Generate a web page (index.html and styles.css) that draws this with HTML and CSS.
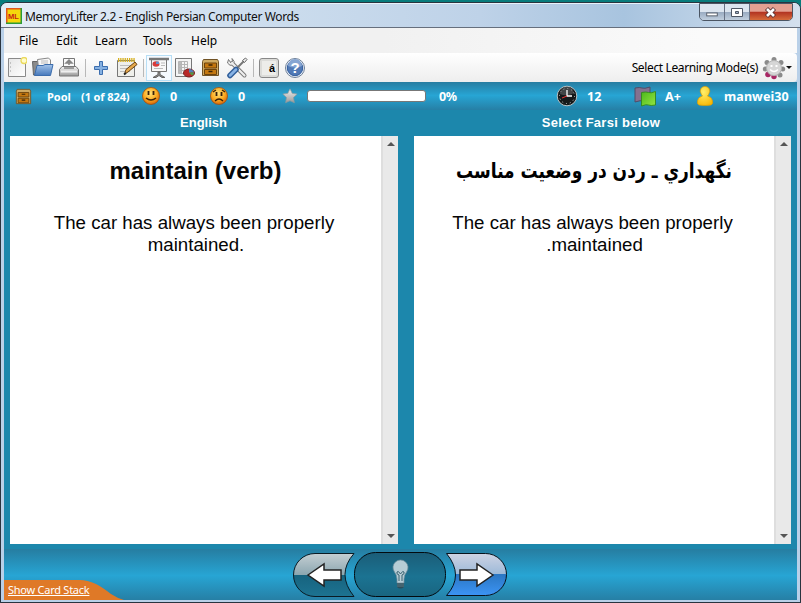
FILE: index.html
```html
<!DOCTYPE html>
<html lang="en">
<head>
<meta charset="utf-8">
<title>MemoryLifter 2.2 - English Persian Computer Words</title>
<link rel="stylesheet" href="styles.css">
</head>
<body>
<svg width="0" height="0" class="defs">
  <defs>
    <linearGradient id="paper" x1="0" y1="0" x2="1" y2="1"><stop offset="0" stop-color="#e6e6e6"/><stop offset="1" stop-color="#fff"/></linearGradient>
    <linearGradient id="blue" x1="0" y1="0" x2="0" y2="1"><stop offset="0" stop-color="#a4c4ea"/><stop offset="1" stop-color="#4678bb"/></linearGradient>
    <linearGradient id="grey" x1="0" y1="0" x2="0" y2="1"><stop offset="0" stop-color="#f4f4f4"/><stop offset="1" stop-color="#999"/></linearGradient>
    <linearGradient id="green" x1="0" y1="0" x2="1" y2="1"><stop offset="0" stop-color="#4cb81c"/><stop offset="1" stop-color="#93e542"/></linearGradient>
    <radialGradient id="face" cx=".45" cy=".35" r=".65"><stop offset="0" stop-color="#ffe27a"/><stop offset=".6" stop-color="#fbab20"/><stop offset="1" stop-color="#d9650c"/></radialGradient>
    <radialGradient id="person" cx=".4" cy=".3" r=".8"><stop offset="0" stop-color="#fff06a"/><stop offset="1" stop-color="#f8b400"/></radialGradient>
    <linearGradient id="navGrey" x1="0" y1="0" x2="0" y2="1"><stop offset="0" stop-color="#c5cfd3"/><stop offset=".5" stop-color="#8ba6b0"/><stop offset=".5" stop-color="#17637f"/><stop offset="1" stop-color="#1d7391"/></linearGradient>
    <linearGradient id="navMid" x1="0" y1="0" x2="0" y2="1"><stop offset="0" stop-color="#1b5d78"/><stop offset=".55" stop-color="#1b7392"/><stop offset="1" stop-color="#196580"/></linearGradient>
    <linearGradient id="navBlue" x1="0" y1="0" x2="0" y2="1"><stop offset="0" stop-color="#ced3e3"/><stop offset=".5" stop-color="#9cb9d8"/><stop offset=".5" stop-color="#2b77c3"/><stop offset="1" stop-color="#3c94f5"/></linearGradient>
    <symbol id="cabinet" viewBox="0 0 19 19"><path d="M2.500 1.500h14l1 2v14h-16v-14z" fill="#d0ab63" stroke="#705225"/><path d="M3.500 5h12v5h-12zM3.500 11.500h12v5h-12z" fill="#c4770f" stroke="#6c430c"/><path d="M7.500 7h4M7.500 13.500h4" fill="none" stroke="#3a2407" stroke-width="1.300"/></symbol>
  </defs>
</svg>
<div class="window">
  <header class="titlebar">
    <svg class="logo" viewBox="0 0 16 16"><path d="M0 0h16v16H0z" fill="#f5d80c"/><path d="M.75 16V.75H16" fill="none" stroke="#e2571b" stroke-width="1.500"/><path d="M15.250 0v15.250H0" fill="none" stroke="#2c9b37" stroke-width="1.500"/><text x="2" y="10.500" class="logo-text">ML</text></svg>
    <span class="title">MemoryLifter 2.2 - English Persian Computer Words</span>
    <div class="controls">
      <span class="control"><svg viewBox="0 0 25 17"><rect x="7" y="9" width="11" height="3" fill="#fff" stroke="#555c68"/></svg></span>
      <span class="control"><svg viewBox="0 0 24 17"><path d="M6.500 4.500h11v8h-11z" fill="#fff" stroke="#4f5866"/><path d="M10.500 7.500h3v2h-3z" fill="#9eafc6" stroke="#4f5866"/></svg></span>
      <span class="control close"><svg viewBox="0 0 42 17"><path d="M16.500 4.500l8 8M24.500 4.500l-8 8" stroke="#5d3434" stroke-width="4.500"/><path d="M17 5l7 7M24 5l-7 7" stroke="#fff" stroke-width="2.600"/></svg></span>
    </div>
  </header>
  <nav class="menu"><span class="m-file">File</span><span class="m-edit">Edit</span><span class="m-learn">Learn</span><span class="m-tools">Tools</span><span class="m-help">Help</span></nav>
  <div class="toolbar">
    <svg class="i-new" viewBox="0 0 20 22"><path d="M1.500 1.500h17v18h-17z" fill="url(#paper)" stroke="#8a8a8a"/><path d="M3 6h1M3 10h1M3 14h1" stroke="#999"/><circle cx="17" cy="3.500" r="3" fill="#fffcc9" stroke="#ead95c" stroke-width="1.300"/></svg>
    <svg class="i-open" viewBox="0 0 24 22"><path d="M2.500 18L1.500 4.500h6l1 2h8V18z" fill="#8b8b8b" stroke="#666"/><path d="M6.500 2.500l11-1.500 2 2v8h-12z" fill="#f7f7f7" stroke="#888"/><path d="M10 4h7M10 6h7" stroke="#bbb"/><path d="M6 8.500h6l2-1h8l-2.500 11H3.500z" fill="url(#blue)" stroke="#3c6dad"/></svg>
    <svg class="i-print" viewBox="0 0 22 22"><path d="M5.500 11V1.500h11V11" fill="#f8f8f8" stroke="#777"/><path d="M11 8V4M11 3l3 3H8z" fill="#858585" stroke="#858585" stroke-width="1.500"/><path d="M4 9.500h14l2.500 3v6.500h-19v-6.500z" fill="url(#grey)" stroke="#777"/><path d="M6 11h10" stroke="#555" stroke-width="1.200"/><path d="M3 13.500h16v2H3z" fill="#eee"/></svg>
    <i class="separator"></i>
    <svg class="i-add" viewBox="0 0 16 16"><path d="M6.500 1.500h3v5h5v3h-5v5h-3v-5h-5v-3h5z" fill="#86b1e2" stroke="#3c6eaf"/></svg>
    <svg class="i-note" viewBox="0 0 22 22"><path d="M1.500 3.500h17v16h-17z" fill="#efefeb" stroke="#777"/><path d="M4 8.500h12M4 11.500h12M4 14.500h10" stroke="#bdbdbd"/><path d="M2 3h17" stroke="#d6b020" stroke-width="4" stroke-dasharray="1.300 .9"/><path d="M8.500 17l1.500-4.500 9-7.500 2 2.500-9 7.500z" fill="#e5a94d" stroke="#664114"/><path d="M8 17.500l2-1.500" stroke="#222" stroke-width="2"/></svg>
    <i class="separator"></i>
    <span class="selected"><svg viewBox="0 0 22 22"><path d="M3.500 2.500h15v12h-15z" fill="#f8f8f8" stroke="#777"/><path d="M1 2h20" stroke="#777" stroke-width="2.500"/><ellipse cx="8" cy="7" rx="3.500" ry="2.700" fill="#d63b3b"/><path d="M8 7V4.500h3V7z" fill="#678fc8"/><path d="M13 6h4M13 8.500h4M6 11.500h9" stroke="#bbb"/><path d="M10 15h2v2.500l5 3h-3l-3-2-3 2H5l5-3z" fill="#888" stroke="#666"/></svg></span>
    <svg class="i-report" viewBox="0 0 22 22"><path d="M1.500 1.500h16v18h-16z" fill="#f4f4f4" stroke="#777"/><path d="M4.500 4.500h3v12h-3z" fill="#bbb"/><path d="M4.500 4.500h9v12h-9zM7.500 4v13M10.500 4v13M4 7.500h10M4 10.500h10M4 13.500h10" fill="none" stroke="#b5b5b5"/><ellipse cx="15" cy="16" rx="5.500" ry="4" fill="#b92828" stroke="#762020"/><path d="M15 15.500v-3.500q4 0 5 3.500z" fill="#527fb9"/><path d="M15 15.500h5q0 2-2 3z" fill="#4e9c45"/></svg>
    <svg class="i-cabinet" viewBox="0 0 19 19"><use href="#cabinet"/></svg>
    <svg class="i-tools" viewBox="0 0 22 22"><path d="M6 6L18.500 18.500" stroke="#777" stroke-width="4" stroke-linecap="round"/><path d="M2.500 2.500L1.500 6q2 3.500 6 2Q9.500 4 6 1.500L6.500 4.500 5 6z" fill="#eee" stroke="#777"/><path d="M6 6L18.500 18.500" stroke="#eee" stroke-width="2.200" stroke-linecap="round"/><path d="M11 11l7-7" stroke="#777" stroke-width="2"/><path d="M16.500 3.500l3-2.500 1.500 1.500-2.500 3z" fill="#eee" stroke="#666"/><path d="M4 18.500L10 12.500" stroke="#315f9b" stroke-width="5.500" stroke-linecap="round"/><path d="M4 18.500L10 12.500" stroke="#88b3e5" stroke-width="2.500" stroke-linecap="round"/></svg>
    <i class="separator"></i>
    <span class="key">á</span>
    <svg class="i-help" viewBox="0 0 22 22"><circle cx="11" cy="11" r="9.500" fill="#e8eef7" stroke="#6d7f98"/><circle cx="11" cy="11" r="7.700" fill="#5179b5" stroke="#315c9e"/><path d="M4 9a7 7 0 0 1 14 0q-7 3-14 0z" fill="#86a5d2"/><text x="11" y="16.300" text-anchor="middle" class="question">?</text></svg>
    <span class="mode">Select Learning Mode(s)</span>
    <svg class="i-gear" viewBox="0 0 24 24"><g fill="#8b8b8b"><circle cx="12" cy="3.500" r="2.500"/><circle cx="5" cy="6.500" r="2.500"/><circle cx="19" cy="6.500" r="2.500"/><circle cx="3.300" cy="13" r="2.500"/><circle cx="20.700" cy="13" r="2.500"/><circle cx="18" cy="19" r="2.500"/></g><circle cx="6" cy="18.500" r="2.800" fill="#a82664"/><circle cx="12" cy="20.500" r="2.700" fill="#a82664"/><circle cx="12" cy="12" r="7.500" fill="#d6d6d6" stroke="#b4b4b4"/><path d="M8.500 10h2M13.500 10h2" stroke="#fff" stroke-width="2"/><path d="M8 13.500q4 4 8 0" fill="none" stroke="#fff" stroke-width="1.500"/></svg>
    <i class="dropdown"></i>
  </div>
  <div class="status">
    <svg class="s-cabinet" viewBox="0 0 19 19"><use href="#cabinet"/></svg>
    <span class="pool">Pool</span><span class="count">(1 of 824)</span>
    <svg class="s-happy" viewBox="0 0 20 20"><circle cx="10" cy="10" r="8.500" fill="url(#face)" stroke="#a34f0c" stroke-width=".8"/><path d="M7.500 5v4M12.500 5v4" stroke="#38200b" stroke-width="1.800"/><path d="M5 12q5 4 10 0" fill="none" stroke="#3d210a" stroke-width="1.600"/></svg>
    <span class="right">0</span>
    <svg class="s-sad" viewBox="0 0 20 20"><circle cx="10" cy="10" r="8.500" fill="url(#face)" stroke="#a34f0c" stroke-width=".8"/><path d="M7.500 6v4M12.500 6v4" stroke="#38200b" stroke-width="1.800"/><path d="M4 6l3-2M13 4l3 2M6 15q4-4 8 0" fill="none" stroke="#38200b" stroke-width="1.200"/></svg>
    <span class="wrong">0</span>
    <svg class="s-star" viewBox="0 0 16 16"><path d="M8 .8l2.200 4.500 5 .8-3.700 3.400.9 5.200L8 12.800l-4.400 1.900.9-5.200L.8 6.100l5-.8z" fill="url(#grey)" stroke="#8b999e" stroke-width=".7"/></svg>
    <span class="progress"></span><span class="percent">0%</span>
    <svg class="s-clock" viewBox="0 0 22 22"><circle cx="11" cy="11" r="9.800" fill="#15191b" stroke="#b8c0c2"/><circle cx="11" cy="11" r="7.500" fill="none" stroke="#ccc" stroke-dasharray="1 2.930"/><path d="M4 9a7 7 0 0 1 14-1q-7 4-14 1z" fill="#7a7d7f" opacity=".45"/><path d="M11 5v6h5" fill="none" stroke="#fff" stroke-width="1.300"/><path d="M11 11l-5 2" stroke="#e33"/></svg>
    <span class="time">12</span>
    <svg class="s-cards" viewBox="0 0 23 21"><path d="M1 2q5-1 7 0t8-1v14q-5 1-7 0t-8 1z" fill="#84718f" stroke="#514c67"/><path d="M7.500 6.500q5-1 7 0t7-1V19q-5 1-7 0t-7 1z" fill="url(#green)" stroke="#368b23"/></svg>
    <span class="grade">A+</span>
    <svg class="s-user" viewBox="0 0 18 22"><path d="M9 1.500a4.500 4.500 0 0 1 4 7q-.5 1.500-1.500 2.500 4.500 1 5 5 .5 3.500-1.500 4-6 1-12 0-2-.5-1.500-4 .5-4 5-5-1-1-1.500-2.500a4.500 4.500 0 0 1 4-7z" fill="url(#person)" stroke="#dd9d00" stroke-width=".7"/></svg>
    <span class="user">manwei30</span>
  </div>
  <main class="cards">
    <section><h2 class="source">English</h2><div class="card"><div class="content"><h1>maintain (verb)</h1><p>The car has always been <span class="line-end">properly</span> maintained.</p></div><div class="scroll"><i class="up"></i><i class="down"></i></div></div></section>
    <section><h2 class="target">Select Farsi below</h2><div class="card"><div class="content answer" dir="rtl"><h1><svg class="farsi" viewBox="0 0 276 36" direction="ltr"><text x="138" y="21" text-anchor="middle" direction="rtl" textLength="276" lengthAdjust="spacingAndGlyphs" lang="fa">نگهداري ـ ردن در وضعيت مناسب</text></svg></h1><p>The car has always been <span class="line-end">properly</span> maintained.</p></div><div class="scroll"><i class="up"></i><i class="down"></i></div></div></section>
  </main>
  <footer class="bottom">
    <div class="stack"><svg viewBox="0 0 120 21" preserveAspectRatio="none"><path d="M0 1h76q7 0 16 4 6 3 15 10 6 4 13 6H0z" fill="#df7927"/></svg><a class="stack-link">Show Card Stack</a></div>
    <svg class="navigation" viewBox="0 0 216 48">
      <path d="M22 3.500h39q-18 20.500 0 43H22a21.500 21.500 0 0 1 0-43z" fill="url(#navGrey)" stroke="#0a1b24"/>
      <rect x="61.500" y="2.500" width="91" height="44" rx="21" fill="url(#navMid)" stroke="#020a0f"/>
      <path d="M153.500 3.500h39a21 21 0 0 1 0 42h-39q18-20 0-42z" fill="url(#navBlue)" stroke="#07121c"/>
      <path d="M15 25l16-11v6h17v10H31v6z" fill="#fff" stroke="#222" stroke-width="1.500"/>
      <path d="M200 25l-16-11v6h-17v10h17v6z" fill="#fff" stroke="#222" stroke-width="1.500"/>
      <path d="M104 33v-4q0-4-2.500-7a7.500 7.500 0 1 1 12 0q-2.500 3-2.500 7v4z" fill="#b7cdd6" stroke="#72919e" stroke-width=".7"/>
      <path d="M106 31v-6q-3-1-2-3t3.500 2q2.500-4 3.500-2t-2 3v6" fill="none" stroke="#37616f"/>
      <path d="M104 33h7v4q-3.500 3-7 0z" fill="#2d4d5a"/><path d="M104 34h7M104 36h7" stroke="#71909c" stroke-width=".7"/>
    </svg>
  </footer>
</div>
</body>
</html>
```
FILE: styles.css
```css
* { box-sizing: border-box; }
body { margin: 0; width: 801px; height: 603px; overflow: hidden; background: linear-gradient(#087c7c 0 50%, #17303c); font-family: "Noto Sans", sans-serif; padding-top: 2px; }
.defs { position: absolute; }
svg { display: block; }
.window { width: 801px; height: 601px; display: grid; grid-template-rows: 25px 25px 29px 28px 26px 413px 51px; border: 1px solid #29343f; border-radius: 7px 7px 0 0; padding: 0 3px 2px; background: #b9d0e8; overflow: hidden; }
.titlebar { display: flex; align-items: center; margin: 0 -3px; padding-left: 5px; background: linear-gradient(90deg, #e4edf6, #cbdced 35%, #bed2e8 60%, #a8c4df 78%, #d4e0ee); border-top: 1px solid #e9f2fa; border-bottom: 1px solid #666f7d; }
.logo { width: 16px; height: 16px; margin-right: 3px; }
.logo-text { font: bold 7.500px "Liberation Sans", sans-serif; fill: #c52117; }
.title { font-size: 12px; letter-spacing: -.37px; color: #101010; white-space: nowrap; padding-top: 2px; }
.controls { display: flex; height: 18px; align-self: flex-start; margin: -1px 7px 0 auto; border: 1px solid #4b5563; border-radius: 0 0 5px 5px; overflow: hidden; }
.control { width: 25px; background: linear-gradient(#dce5ef 48%, #9aacc2 52%, #c1cfde); border-right: 1px solid #677285; }
.control svg { width: 100%; height: 17px; }
.control.close { width: 42px; border: 0; background: linear-gradient(#e4a091 45%, #b33422 52%, #d66c3b); }
.menu { display: flex; background: linear-gradient(90deg, #f1f1f1 0 48%, #fafafa 88%); font-size: 12px; line-height: 25px; padding-left: 15px; }
.m-file { width: 37px; }
.m-edit { width: 39px; }
.m-learn { width: 48px; }
.m-tools { width: 48px; }
.toolbar { display: grid; grid-template-columns: 24px 27px 27px 8px 23px 27px 3px 28px 27px 25px 27px 6px 25px 26px 1fr 27px 12px; padding-left: 3px; align-items: center; background: linear-gradient(#fff, #f7f7f7 45%, #eee); border-radius: 0 4px 4px 0; }
.i-new { width: 20px; height: 22px; }
.i-open { width: 24px; height: 22px; }
.i-print, .i-note, .i-report, .i-tools, .i-help { width: 22px; height: 22px; }
.i-add { width: 16px; height: 16px; }
.i-cabinet { width: 19px; height: 19px; }
.separator { height: 18px; border-left: 1px solid #b8b8b8; }
.selected { width: 26px; height: 26px; border: 1px solid #b7def5; background: #f5faff; padding: 1px; }
.selected svg { width: 22px; height: 22px; }
.key { width: 20px; height: 20px; border: 1px solid #888; border-radius: 3px; background: #ededea; box-shadow: inset 0 0 0 2px #dcdcd9; font: bold 11px/18px "Liberation Sans", sans-serif; padding-left: 9px; }
.question { font: bold 15px "Liberation Sans", sans-serif; fill: #fff; }
.mode { justify-self: end; font-size: 12px; letter-spacing: -.37px; white-space: nowrap; margin-bottom: 1px; }
.i-gear { width: 24px; height: 24px; margin-left: 4px; }
.dropdown { border: 3px solid transparent; border-top-color: #111; border-bottom: 0; width: 6px; margin-left: 1px; }
.status { display: grid; grid-template-columns: 31px 35px 60px 29px 39px 29px 42px 25px 134px 117px 31px 47px 31px 31px 28px 1fr; padding-left: 11px; align-items: center; background: linear-gradient(#277da1, #27a5d4 48%, #267fa5); color: #fff; font-size: 12.500px; font-weight: bold; white-space: nowrap; }
.s-cabinet { width: 17px; height: 17px; }
.s-happy, .s-sad { width: 20px; height: 20px; }
.pool, .count { font-size: 11px; padding-left: 1px; }
.count { letter-spacing: -.1px; padding-left: 0; }
.s-star { width: 16px; height: 16px; margin-left: 2px; }
.progress { width: 119px; height: 12px; border: 1px solid #777; border-radius: 3px; background: #fff; margin-left: 2px; }
.percent { letter-spacing: -.5px; }
.s-clock { width: 22px; height: 22px; }
.s-cards { width: 23px; height: 21px; }
.s-user { width: 18px; height: 22px; }
.user { letter-spacing: .1px; }
.cards { grid-row: span 2; display: grid; grid-template-columns: 388px 377px; gap: 16px; padding-left: 6px; background: #1c87ac; }
h2 { height: 26px; margin: 0; text-align: center; color: #fff; font: bold 13px/25px "Liberation Sans", sans-serif; }
.source { padding-right: 1px; }
.target { letter-spacing: .27px; padding-right: 3px; }
.card { height: 408px; display: flex; background: #fff; }
.content { flex: 1; min-width: 0; text-align: center; padding: 0 8px; color: #050505; }
h1 { margin: 21px 0 27px; height: 28px; font: bold 24px/28px "Liberation Sans", sans-serif; white-space: nowrap; }
p { margin: 0; padding: 0 25px 0 26px; font: 18.700px/22px "Liberation Sans", sans-serif; }
.line-end { padding-right: 4px; }
.answer { padding: 0 6px; }
.answer p { padding: 0 18px 0 19px; }
.farsi { width: 276px; height: 36px; margin: 0 auto; overflow: visible; font: bold 21px "DejaVu Sans", sans-serif; }
.scroll { width: 17px; background: #e9e9e9; border-left: 2px solid #dedede; display: flex; flex-direction: column; justify-content: space-between; align-items: center; padding: 6px 0; }
.up, .down { border: 4px solid transparent; border-top: 0; border-bottom-color: #555; }
.down { border-top: 4px solid #555; border-bottom: 0; }
.bottom { display: grid; grid-template-columns: 289px 216px; background: linear-gradient(#267da1, #27a5d4 52%, #267fa5); }
.stack { align-self: end; display: grid; height: 21px; }
.stack svg { width: 120px; height: 21px; grid-area: 1 / 1; }
.stack-link { grid-area: 1 / 1; color: #fff; font-size: 11px; letter-spacing: -.25px; line-height: 22px; text-decoration: underline; padding-left: 4px; }
.navigation { width: 216px; height: 48px; margin-top: 1px; }
```
